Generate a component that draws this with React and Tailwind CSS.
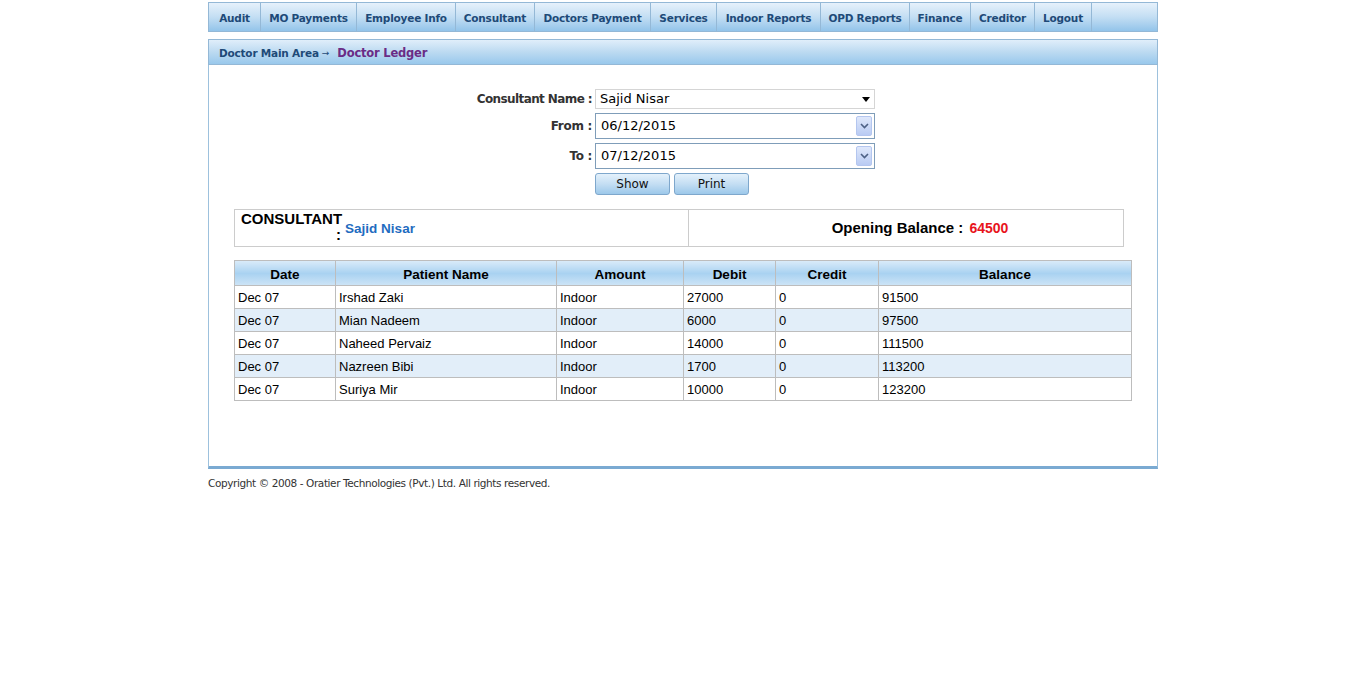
import { useState } from "react";

const navItems = [
  { label: "Audit", w: 52 },
  { label: "MO Payments", w: 96 },
  { label: "Employee Info", w: 99 },
  { label: "Consultant", w: 79 },
  { label: "Doctors Payment", w: 116 },
  { label: "Services", w: 66 },
  { label: "Indoor Reports", w: 104 },
  { label: "OPD Reports", w: 89 },
  { label: "Finance", w: 61 },
  { label: "Creditor", w: 64 },
  { label: "Logout", w: 57 },
];

const rows = [
  { date: "Dec 07", name: "Irshad Zaki", amount: "Indoor", debit: "27000", credit: "0", balance: "91500" },
  { date: "Dec 07", name: "Mian Nadeem", amount: "Indoor", debit: "6000", credit: "0", balance: "97500" },
  { date: "Dec 07", name: "Naheed Pervaiz", amount: "Indoor", debit: "14000", credit: "0", balance: "111500" },
  { date: "Dec 07", name: "Nazreen Bibi", amount: "Indoor", debit: "1700", credit: "0", balance: "113200" },
  { date: "Dec 07", name: "Suriya Mir", amount: "Indoor", debit: "10000", credit: "0", balance: "123200" },
];

const cols = [
  { key: "date", label: "Date", w: 101 },
  { key: "name", label: "Patient Name", w: 221 },
  { key: "amount", label: "Amount", w: 127 },
  { key: "debit", label: "Debit", w: 92 },
  { key: "credit", label: "Credit", w: 103 },
  { key: "balance", label: "Balance", w: 253 },
];

function DateBox({ value }) {
  return (
    <div className="flex items-center w-[280px] h-[26px] border border-[#7f9db9] bg-white pl-[5px] pr-[2px]">
      <span className="flex-1 text-[13px] text-black">{value}</span>
      <span className="flex items-center justify-center w-[16px] h-[20px] bg-gradient-to-b from-[#dfe8fb] to-[#b9cbf3] border border-[#b4c6ef] rounded-[2px]">
        <svg width="9" height="6" viewBox="0 0 9 6">
          <path d="M1 1 L4.5 4.5 L8 1" stroke="#4d6185" strokeWidth="1.6" fill="none" />
        </svg>
      </span>
    </div>
  );
}

export default function App() {
  const [consultant] = useState("Sajid Nisar");

  return (
    <div className="min-h-[678px] bg-white font-['DejaVu_Sans',sans-serif]">
      <div className="w-[950px] ml-[208px] pt-[2px]">
        {/* Top menu */}
        <div className="flex h-[30px] border border-[#94b8d6] bg-gradient-to-b from-[#e6f1fb] via-[#c3def3] to-[#93c4ea]">
          {navItems.map((n) => (
            <div
              key={n.label}
              style={{ width: n.w }}
              className="flex items-center justify-center pt-[3px] border-r border-[#94b8d6] text-[10.5px] font-bold text-[#1e4a78] tracking-[-0.2px]"
            >
              {n.label}
            </div>
          ))}
        </div>

        {/* Breadcrumb */}
        <div className="mt-[7px] flex items-center h-[26px] pt-[3px] border border-[#94b8d6] bg-gradient-to-b from-[#e0eefa] via-[#bcdaf1] to-[#99c8ec] pl-[10px]">
          <span className="text-[10.5px] font-bold text-[#1e4a78] tracking-[-0.2px]">Doctor Main Area</span>
          <span className="text-[9px] text-[#1e4a78] ml-[3px] mr-[8px]">→</span>
          <span className="text-[11.5px] font-bold text-[#6a2c86] tracking-[-0.2px]">Doctor Ledger</span>
        </div>

        {/* Content */}
        <div className="border-x border-[#9dc1dd] border-b-[3px] border-b-[#7aaad2] h-[404px] pt-[23px]">
          <div className="flex flex-col items-center">
            <div className="flex flex-col gap-[4px] ml-[-22px]">
              <div className="flex items-center pt-[1px]">
                <span className="w-[126px] pr-[3px] text-right text-[12px] font-bold text-[#333] tracking-[-0.6px]">Consultant Name :</span>
                <div className="flex items-center w-[280px] h-[20px] border border-[#d5d5d5] bg-white pl-[4px] pr-[4px]">
                  <span className="flex-1 text-[13px] text-black">{consultant}</span>
                  <svg width="8" height="5" viewBox="0 0 8 5">
                    <path d="M0 0 H8 L4 5 Z" fill="#000" />
                  </svg>
                </div>
              </div>
              <div className="flex items-center">
                <span className="w-[126px] pr-[3px] text-right text-[12px] font-bold text-[#333] tracking-[-0.3px]">From :</span>
                <DateBox value="06/12/2015" />
              </div>
              <div className="flex items-center">
                <span className="w-[126px] pr-[3px] text-right text-[12px] font-bold text-[#333] tracking-[-0.3px]">To :</span>
                <DateBox value="07/12/2015" />
              </div>
              <div className="flex gap-[4px] pl-[126px]">
                <button className="w-[75px] h-[22px] rounded-[3px] border border-[#7ea7cc] bg-gradient-to-b from-[#e4f1fb] via-[#c4def3] to-[#9cc8ea] text-[12px] text-[#111]">
                  Show
                </button>
                <button className="w-[75px] h-[22px] rounded-[3px] border border-[#7ea7cc] bg-gradient-to-b from-[#e4f1fb] via-[#c4def3] to-[#9cc8ea] text-[12px] text-[#111]">
                  Print
                </button>
              </div>
            </div>
          </div>

          <div className="ml-[25px] mt-[14px] font-['Liberation_Sans',Arial,sans-serif]">
            {/* Info box */}
            <div className="flex w-[890px] h-[38px] border border-[#cccccc]">
              <div className="w-[454px] border-r border-[#cccccc] flex pl-[6px] pt-[1px]">
                <div className="flex flex-col text-[15px] font-bold text-black leading-[16px]">
                  <span>CONSULTANT</span>
                  <span className="text-right pr-[1px]">:</span>
                </div>
                <span className="ml-[3px] mt-[8px] text-[13.5px] font-bold text-[#1f6cc0]">{consultant}</span>
              </div>
              <div className="flex-1 flex items-center justify-center pl-[28px] pt-[1px] text-[15px] font-bold text-black">
                Opening Balance :
                <span className="ml-[6px] text-[14px] text-[#e8141c]">64500</span>
              </div>
            </div>

            {/* Ledger table */}
            <table className="mt-[13px] border-collapse text-[13px] text-black">
              <thead>
                <tr className="h-[25px] bg-gradient-to-b from-[#d9ebf9] via-[#a9d2f1] to-[#cfe5f7]">
                  {cols.map((c) => (
                    <th
                      key={c.key}
                      style={{ width: c.w }}
                      className="border border-[#bdbdbd] text-center font-bold text-[13.5px] pt-[4px] pb-0 px-0"
                    >
                      {c.label}
                    </th>
                  ))}
                </tr>
              </thead>
              <tbody>
                {rows.map((r, i) => (
                  <tr key={i} className={i % 2 === 1 ? "h-[23px] bg-[#e2eef9]" : "h-[23px] bg-white"}>
                    {cols.map((c) => (
                      <td key={c.key} className="border border-[#bdbdbd] px-[3px] pt-[2px] pb-0 leading-[20px] text-left">
                        {r[c.key]}
                      </td>
                    ))}
                  </tr>
                ))}
              </tbody>
            </table>
          </div>
        </div>

        <div className="mt-[7px] text-[10.5px] text-[#333] tracking-[-0.4px]">
          Copyright © 2008 - Oratier Technologies (Pvt.) Ltd. All rights reserved.
        </div>
      </div>
    </div>
  );
}
